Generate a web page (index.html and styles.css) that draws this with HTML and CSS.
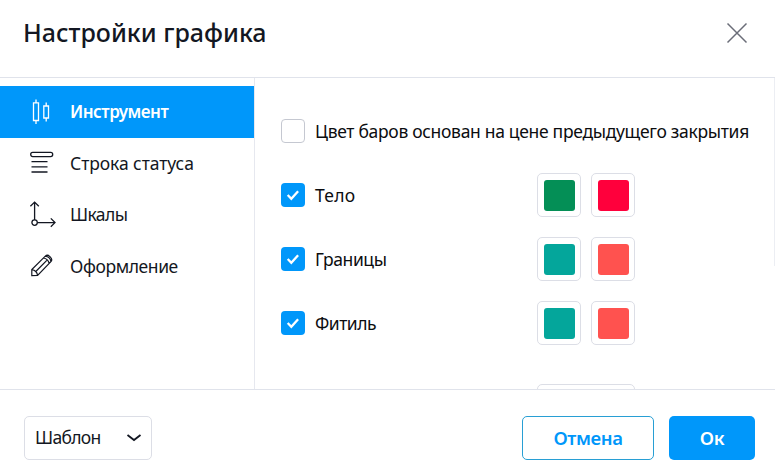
FILE: index.html
```
<!DOCTYPE html>
<html lang="ru">

    <head>
        <meta charset="UTF-8">
        <meta name="viewport" content="width=device-width, initial-scale=1.0">
        <title>Настройки графика</title>
        <link rel="stylesheet" href="styles.css">
    </head>

    <body>
        <div class="dialog">
            <header class="header">
                <h1>Настройки графика</h1>
                <button class="close" type="button" aria-label="Закрыть">
                    <svg width="22" height="22" viewBox="0 0 22 22"><path d="M1.5 1.5l19 19M20.5 1.5l-19 19" /></svg>
                </button>
            </header>
            <div class="content">
                <nav class="tabs">
                    <a class="tab active" href="#">
                        <svg class="icon" width="28" height="28" viewBox="0 0 28 28">
                            <path d="M5.5 4.8h5v17.7h-5zM8 1.5v3.3M8 22.5v3.5M15.8 8h4.7v12h-4.7zM18.2 4.5v3.5M18.2 20v3.5" />
                        </svg>
                        <span class="name-symbol">Инструмент</span>
                    </a>
                    <a class="tab" href="#">
                        <svg class="icon" width="28" height="28" viewBox="0 0 28 28">
                            <rect x="2.7" y="3.4" width="22" height="4.2" rx="2" />
                            <path d="M3.5 12.7h16M3.5 17.8h16M3.5 23h16" />
                        </svg>
                        <span class="name-status">Строка статуса</span>
                    </a>
                    <a class="tab" href="#">
                        <svg class="icon" width="28" height="28" viewBox="0 0 28 28">
                            <circle cx="6.6" cy="21.6" r="2.7" />
                            <path d="M6.6 18.9V1.4M2.4 5.2l4.2-4.1 4.2 4.1M9.3 21.6h17.5M22.8 17.4l4.2 4.2-4.2 4.2" />
                        </svg>
                        <span class="name-scales">Шкалы</span>
                    </a>
                    <a class="tab" href="#">
                        <svg class="icon icon-pencil" width="28" height="28" viewBox="0 0 28 28">
                            <path d="M3.8 23.6V17.6L17.3 4.1q2.2-2 4.9.7 2.7 2.6.7 4.9L9.6 23.4zM3.8 17.6q5 .8 5.8 5.8M15.4 6q4.9.8 5.8 5.6M17.3 4.1q4.9.8 5.7 5.5M7.3 20L18.8 8.3" />
                        </svg>
                        <span class="name-view">Оформление</span>
                    </a>
                </nav>
                <main class="options">
                    <label class="row">
                        <span class="check"></span>
                        <span class="label">Цвет баров основан на цене предыдущего закрытия</span>
                    </label>
                    <div class="row">
                        <span class="check checked"><svg width="24" height="24" viewBox="0 0 24 24"><path d="M6.7 12l3.6 3.7 6.8-7.5" /></svg></span>
                        <span class="label label-body">Тело</span>
                        <button class="swatch" type="button"><i class="green"></i></button>
                        <button class="swatch" type="button"><i class="crimson"></i></button>
                    </div>
                    <div class="row">
                        <span class="check checked"><svg width="24" height="24" viewBox="0 0 24 24"><path d="M6.7 12l3.6 3.7 6.8-7.5" /></svg></span>
                        <span class="label label-borders">Границы</span>
                        <button class="swatch" type="button"><i class="teal"></i></button>
                        <button class="swatch" type="button"><i class="coral"></i></button>
                    </div>
                    <div class="row">
                        <span class="check checked"><svg width="24" height="24" viewBox="0 0 24 24"><path d="M6.7 12l3.6 3.7 6.8-7.5" /></svg></span>
                        <span class="label label-wick">Фитиль</span>
                        <button class="swatch" type="button"><i class="teal"></i></button>
                        <button class="swatch" type="button"><i class="coral"></i></button>
                    </div>
                    <div class="next-field"></div>
                    <div class="scroll-edge"></div>
                </main>
            </div>
            <footer class="footer">
                <button class="template" type="button">
                    <span>Шаблон</span>
                    <svg width="16" height="10" viewBox="0 0 16 10"><path d="M1.5 2l6.5 5 6.5-5" /></svg>
                </button>
                <button class="button cancel" type="button">Отмена</button>
                <button class="button ok" type="button">Ок</button>
            </footer>
        </div>
    </body>

</html>
```
FILE: styles.css
```
* {
    margin: 0;
    padding: 0;
    box-sizing: border-box;
}

body {
    background-color: #ffffff;
    color: #131722;
    font-family: 'Noto Sans', sans-serif;
    font-size: 17.5px;
    overflow: hidden;
}

svg {
    display: block;
    fill: none;
    stroke: currentColor;
}

button {
    font: inherit;
    color: inherit;
    background: none;
    border: none;
    cursor: pointer;
}

.dialog {
    height: 471px;
    display: flex;
    flex-direction: column;
}

.header {
    height: 78px;
    flex: none;
    display: flex;
    align-items: center;
    justify-content: space-between;
    padding: 0 27px 11px 23px;
    border-bottom: 1px solid #e0e3eb;
}

h1 {
    font-size: 25px;
    font-weight: 500;
    line-height: 32px;
    padding-bottom: 3px;
}

.close {
    color: #6a6d78;
}

.close svg {
    stroke-width: 1.5;
}

.content {
    height: 311px;
    flex: none;
    display: flex;
}

.tabs {
    width: 255px;
    flex: none;
    padding-top: 8px;
    border-right: 1px solid #e6e8ef;
}

.tab {
    height: 51.5px;
    display: flex;
    align-items: center;
    gap: 14px;
    padding-left: 28px;
    color: #131722;
    text-decoration: none;
}

.tab span {
    padding-bottom: 1px;
}

.tab.active {
    background-color: #0097fa;
    color: #ffffff;
    font-weight: 600;
}

.name-symbol {
    font-size: 17px;
    letter-spacing: -0.5px;
}

.name-status {
    letter-spacing: -0.07px;
}

.name-scales {
    letter-spacing: -0.6px;
}

.name-view {
    letter-spacing: -0.4px;
}

.icon {
    stroke-width: 1.3;
}

.icon-pencil {
    stroke-width: 1.2;
}

.options {
    position: relative;
    flex: 1;
    padding: 21px 0 0 26px;
    overflow: hidden;
    color: #0c0d10;
}

.row {
    height: 64px;
    display: flex;
    align-items: center;
}

.check {
    width: 24px;
    height: 24px;
    flex: none;
    margin-right: 10px;
    border: 1px solid #c5c8d1;
    border-radius: 4px;
}

.check.checked {
    border: none;
    background-color: #0097fa;
    color: #ffffff;
}

.check svg {
    stroke-width: 2.3;
}

.label {
    width: 222px;
    flex: none;
    padding-bottom: 1px;
    letter-spacing: -0.31px;
    white-space: nowrap;
}

.label-body {
    letter-spacing: 0.3px;
}

.label-borders {
    letter-spacing: -0.4px;
}

.label-wick {
    letter-spacing: -0.5px;
}

.swatch {
    width: 44px;
    height: 44px;
    flex: none;
    display: flex;
    align-items: center;
    justify-content: center;
    margin-right: 10px;
    border: 1px solid #dcdee6;
    border-radius: 5px;
}

.swatch i {
    width: 31px;
    height: 31px;
    border-radius: 3px;
}

.green {
    background-color: #048f56;
}

.crimson {
    background-color: #ff003c;
}

.teal {
    background-color: #04a69b;
}

.coral {
    background-color: #ff524f;
}

.next-field {
    width: 98px;
    height: 44px;
    margin: 29px 0 0 256px;
    border: 1px solid #dcdee6;
    border-radius: 5px;
}

.scroll-edge {
    position: absolute;
    top: 0;
    right: 0;
    width: 1px;
    height: 188px;
    background-color: #eceef3;
}

.footer {
    flex: 1;
    display: flex;
    align-items: flex-start;
    padding: 26px 20px 0 24px;
    border-top: 1px solid #e0e3eb;
}

.template {
    width: 128px;
    height: 44px;
    display: flex;
    align-items: center;
    justify-content: space-between;
    padding: 0 9px 0 10px;
    border: 1px solid #dcdee6;
    border-radius: 5px;
}

.template span {
    padding-bottom: 2px;
    letter-spacing: -0.7px;
}

.template svg {
    stroke-width: 1.8;
}

.button {
    height: 44px;
    padding-bottom: 2px;
    border-radius: 5px;
    font-size: 18.5px;
    font-weight: 600;
}

.cancel {
    width: 132px;
    margin: 0 15px 0 auto;
    border: 1px solid #289fd4;
    color: #0097fa;
    letter-spacing: -0.4px;
}

.ok {
    width: 86px;
    background-color: #0097fa;
    color: #ffffff;
    letter-spacing: -0.3px;
}
```
